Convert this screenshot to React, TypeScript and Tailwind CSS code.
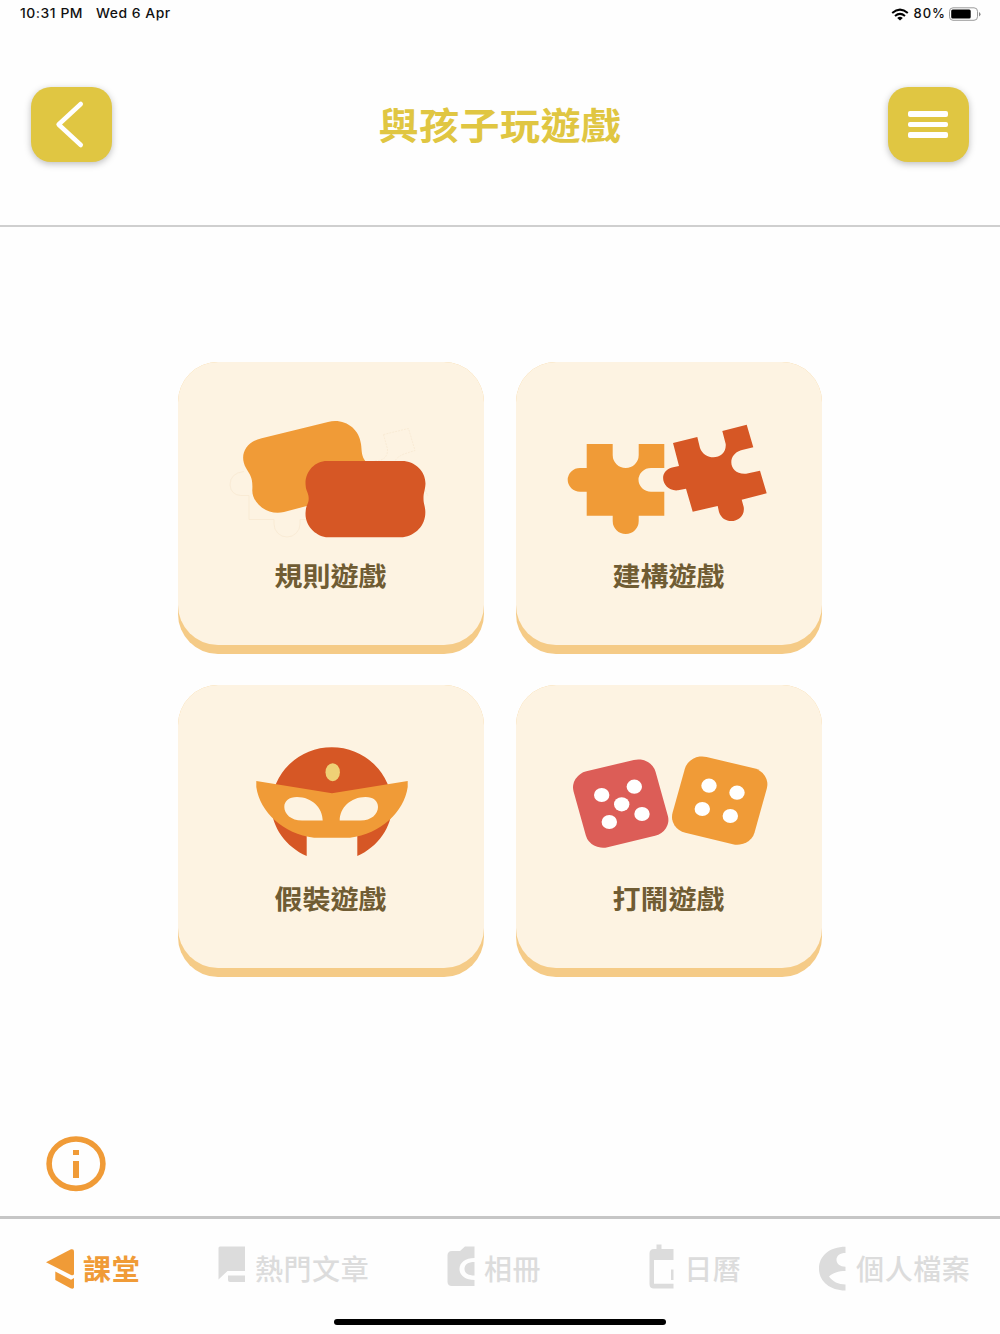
import type { ReactNode } from "react";

const ORANGE = "#f09b37";
const RED = "#d65725";

// The art keeps one shared coordinate space per card row, so each viewBox
// simply frames the region the drawing lives in.

function CardsArt() {
  return (
    <svg viewBox="178 411 306 140" className="h-[140px] w-[306px]" aria-hidden="true">
      {/* barely visible puzzle outlines behind the two cards */}
      <g fill="none" stroke="#f8e8d2" strokeWidth="0.8">
        <path d="M244 471.5Q230 473 230 485Q231 495 241 495.5H249V519.5H274V524A13 13 0 0 0 300 524V519.5H306" />
        <path
          d="M383.500 434.500L408.500 428.500L415 450.500L404 454Q397 457 395 461M383.500 434.500L387.500 449Q388 461 374 461M425 490L428 496"
          strokeDasharray="2 1"
        />
      </g>
      <path
        d="M261.700 438.300L328 422C344 418 359 428 361 444C362 451 361 456 366 462V492L306.700 506L284 512C267 516 252 503 252.300 490C253 477 250 475 246 468C239 456 245 442 261.700 438.300Z"
        fill={ORANGE}
      />
      <path
        d="M327 461H402C416 461 427 473 425.300 486C424.500 492 423.500 493 423.500 498.500C423.500 504 425 505 425.300 511C426 525 416 535 403 537.200H326C314 535 304 524 305.700 511C306 505 308.700 504 308.700 498.500C308.700 493 306 491 305.700 486C304 473 314 461 327 461Z"
        fill={RED}
      />
    </svg>
  );
}

function PuzzleArt() {
  return (
    <svg viewBox="516 411 306 140" className="h-[140px] w-[306px]" aria-hidden="true">
      <path
        d="M586.700 444H612.700V455A13 13 0 0 0 638.700 455V444H664.300V468H651A12.500 11.850 0 0 0 651 491.700H664.300V515.700H638.700V521A13 13 0 0 1 612.700 521V515.700H586.700V491.700H580A12.300 11.850 0 0 1 580 468H586.700Z"
        fill={ORANGE}
      />
      <path
        d="M673 443L697.300 437L700 448C705 462 727 460 725.700 444L722.300 431L746.700 424.700L753.300 447.300L741 450.300C726 455 729 475 746 473.700L760 470.700L766.700 493.300L741.700 499.700L743.700 507C746 522 724 527 719 512L717.700 506L692.700 511.700L686 488.700L678 490.300C663 492 656.500 472 672 467.500L679 466Z"
        fill={RED}
      />
    </svg>
  );
}

function MaskArt() {
  return (
    <svg viewBox="178 734 306 140" className="h-[140px] w-[306px]" aria-hidden="true">
      <path
        d="M271.500 806A60.250 58.700 0 0 1 392 806C392 827 378 847 357.300 856V830H306.700V856C286 847 271.500 827 271.500 806Z"
        fill={RED}
      />
      <path
        d="M256.300 781L332 793.300L407.700 781V787C404 812 381 834 350 837.700H314C283 834 260 812 256.300 787Z"
        fill={ORANGE}
      />
      <path
        d="M297 797C312 797 322.700 808 322.700 820.500H302C291 820.500 284.300 814 284.300 807C284.300 801 289 797 297 797ZM365.500 797C350.500 797 339.700 808 339.700 820.500H360.500C371.500 820.500 378 814 378 807C378 801 373.500 797 365.500 797Z"
        fill="#fdf3e2"
      />
      <ellipse cx="332.700" cy="772.200" rx="7.200" ry="9" fill="#efd176" />
    </svg>
  );
}

const RED_PIPS = [
  [601.7, 795],
  [634.3, 786.7],
  [621.7, 804.3],
  [609.3, 822],
  [642, 814],
];
const ORANGE_PIPS = [
  [709, 785.7],
  [737, 792.7],
  [702.3, 809],
  [730.3, 816],
];

function DiceArt() {
  return (
    <svg viewBox="516 734 306 140" className="h-[140px] w-[306px]" aria-hidden="true">
      <rect
        x="-39.200"
        y="-39.200"
        width="78.400"
        height="78.400"
        rx="16.500"
        transform="translate(620.700 803.600) scale(1.080 1) rotate(-14.500)"
        fill="#dc5d57"
      />
      <rect
        x="-39.200"
        y="-39.200"
        width="78.400"
        height="78.400"
        rx="16.500"
        transform="translate(719.700 800.600) scale(1.080 1) rotate(14.500)"
        fill={ORANGE}
      />
      {[...RED_PIPS, ...ORANGE_PIPS].map(([cx, cy]) => (
        <ellipse key={`${cx}-${cy}`} cx={cx} cy={cy} rx="7.700" ry="7.100" fill="#fff" />
      ))}
    </svg>
  );
}

interface GameCardProps {
  label: string;
  children: ReactNode;
}

function GameCard({ label, children }: GameCardProps) {
  return (
    <button className="h-[292px] w-[306px] rounded-[40px] bg-[#f5cb87] pb-[9px]">
      <span className="flex h-full flex-col items-center overflow-hidden rounded-[40px] bg-[#fdf3e2] pt-[49px]">
        {children}
        <span className="mt-1 mr-px scale-y-95 text-[28px] leading-[40px] font-bold text-[#705c33]">{label}</span>
      </span>
    </button>
  );
}

interface NavItem {
  label: string;
  active?: boolean;
  icon: ReactNode;
}

const NAV_ITEMS: NavItem[] = [
  {
    label: "課堂",
    active: true,
    icon: (
      <>
        <path d="M0 18.200L25 5.300Q28 4.500 28 7.500V30Q27.500 32 25 31Z" />
        <path d="M9.300 27.500L25 35.800L28 34V43.500Q27 45.500 24.500 44.300L9.300 36Z" />
      </>
    ),
  },
  {
    label: "熱門文章",
    icon: (
      <>
        <path d="M2 2.500H27V27H9.500L0.500 35.500V4Q0.500 2.500 2 2.500Z" />
        <path d="M10 31.500H27V38H12Q10 38 10 36Z" />
      </>
    ),
  },
  {
    label: "相冊",
    icon: (
      <path d="M5 7H13L18 2.500H27.500V14C18.500 14 12.500 18.500 12.500 25C12.500 31.500 18.500 36 27.500 36V42H5Q0.500 42 0.500 37.500V11.500Q0.500 7 5 7ZM27.500 18V31.500C21 31.500 17.500 29 17.500 25C17.500 20.500 21 18 27.500 18Z" />
    ),
  },
  {
    label: "日曆",
    icon: (
      <>
        <path
          fillRule="evenodd"
          d="M9.500 0.500H14.500V5H26.500V16H7V39.800H26.500V44.500H7Q2.500 44.500 2.500 40V9.500Q2.500 5 7 5H9.500Z"
        />
        <path d="M24 25.500H26.500V36H24Z" />
      </>
    ),
  },
  {
    label: "個人檔案",
    icon: (
      <path d="M26.500 2.800V9C21 9 17.500 11.500 17.500 15.800C17.500 20 21 22.700 26.500 22.700V27C19.500 27 13.500 29 10 32.500C13.500 37.500 19.500 40.500 26.500 40.500V46.500C10.500 46.500 0 37 0 24.700C0 12 10.500 2.800 26.500 2.800Z" />
    ),
  },
];

function StatusBar() {
  return (
    <div className="flex h-7 items-center justify-between pr-[18px] pl-5 font-[Inter,sans-serif] text-[13px] font-medium tracking-[0.5px] text-[#111]">
      <div className="flex origin-left scale-x-107 gap-3">
        <span>10:31 PM</span>
        <span>Wed 6 Apr</span>
      </div>
      <div className="flex items-center">
        <svg viewBox="0 0 18 13" className="mr-[5px] h-[13px] w-[18px]" aria-hidden="true">
          <g fill="none" stroke="#000" strokeWidth="2">
            <path d="M1.200 5Q9 -1.700 16.800 5" />
            <path d="M4 8Q9 3.700 14 8" />
          </g>
          <path d="M9 12.500L6.200 9.900Q9 7.700 11.800 9.900Z" />
        </svg>
        <span className="tracking-[1px]">80%</span>
        <svg viewBox="0 0 32 14" className="mr-px ml-[3px] h-3.5 w-8" aria-hidden="true">
          <rect x="0.500" y="0.800" width="28" height="12.500" rx="3.500" fill="none" stroke="#9c9c9c" />
          <rect x="2.200" y="2.500" width="19.500" height="9" rx="1.500" />
          <path d="M30 5V9.500Q31.500 8.500 31.500 7.200Q31.500 6 30 5Z" fill="#888" />
        </svg>
      </div>
    </div>
  );
}

export default function App() {
  return (
    <div className="flex h-[1334px] w-[1000px] flex-col overflow-hidden bg-[#fefefe] font-['Noto_Sans_CJK_TC',sans-serif]">
      <StatusBar />

      <header className="flex h-[199px] shrink-0 items-start justify-between border-b-2 border-[#cfcfcf] px-[31px] pt-[59px]">
        <button
          aria-label="返回"
          className="flex h-[75px] w-[81px] items-center justify-center rounded-[20px] bg-[#e0c642] shadow-[0_2px_7px_rgba(0,0,0,0.26)]"
        >
          <svg viewBox="0 0 81 75" className="h-[75px] w-[81px]" aria-hidden="true">
            <path
              d="M49.800 17L27.600 37.500L49.800 58"
              fill="none"
              stroke="#fff"
              strokeWidth="4.500"
              strokeLinecap="round"
              strokeLinejoin="round"
            />
          </svg>
        </button>
        <h1 className="mt-[7px] scale-y-93 text-[40px] leading-[60px] font-bold tracking-[0.5px] text-[#e0c642]">
          與孩子玩遊戲
        </h1>
        <button
          aria-label="選單"
          className="flex h-[75px] w-[81px] flex-col items-center justify-center gap-[5px] rounded-[20px] bg-[#e0c642] pr-0.5 shadow-[0_2px_7px_rgba(0,0,0,0.26)]"
        >
          <span className="h-[5.5px] w-10 rounded-[2px] bg-white" />
          <span className="h-[5.5px] w-10 rounded-[2px] bg-white" />
          <span className="h-[5.5px] w-10 rounded-[2px] bg-white" />
        </button>
      </header>

      <main className="flex grow flex-col justify-between pt-[135px] pb-6">
        <div className="mx-auto grid grid-cols-2 gap-x-8 gap-y-[31px]">
          <GameCard label="規則遊戲">
            <CardsArt />
          </GameCard>
          <GameCard label="建構遊戲">
            <PuzzleArt />
          </GameCard>
          <GameCard label="假裝遊戲">
            <MaskArt />
          </GameCard>
          <GameCard label="打鬧遊戲">
            <DiceArt />
          </GameCard>
        </div>

        <button aria-label="說明" className="ml-[46px] h-14 w-[60px]">
          <svg viewBox="0 0 60 56" className="h-14 w-[60px]" aria-hidden="true">
            <ellipse cx="30" cy="27.700" rx="26.900" ry="24.700" fill="none" stroke={ORANGE} strokeWidth="5.600" />
            <path d="M27 14H33V19H27ZM27 25H33V42H27Z" fill={ORANGE} />
          </svg>
        </button>
      </main>

      <nav className="grid h-[118px] shrink-0 grid-cols-[repeat(5,200.4px)] content-start border-t-3 border-[#c6c6c6] pt-[25px]">
        {NAV_ITEMS.map(({ label, active, icon }) => (
          <a
            key={label}
            className={`flex h-[50px] items-center justify-center gap-[9px] pr-3.5 text-[28px] tracking-[0.6px] ${
              active ? "font-bold text-[#f09b37]" : "font-medium text-[#dcdcdc]"
            }`}
          >
            <svg viewBox="0 0 28 50" className="h-[50px] w-7 shrink-0 fill-current" aria-hidden="true">
              {icon}
            </svg>
            <span className="-mt-0.5 whitespace-nowrap">{label}</span>
          </a>
        ))}
        <span className="col-span-5 mt-[25px] ml-[334px] h-1.5 w-[332px] rounded-full bg-black" />
      </nav>
    </div>
  );
}
